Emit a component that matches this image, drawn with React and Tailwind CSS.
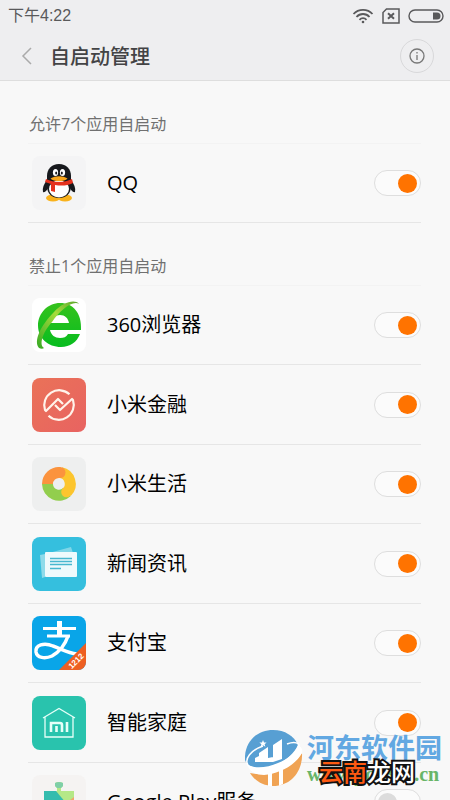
import { useState } from 'react';

const QQIcon = () => (
  <svg viewBox="0 0 54 54" className="size-full">
    <rect width="54" height="54" rx="8" fill="#f4f4f5" />
    <ellipse cx="21" cy="42" rx="7" ry="3.500" fill="#f9b21c" />
    <ellipse cx="33" cy="42" rx="7" ry="3.500" fill="#f9b21c" />
    <path d="M15 24c-3 4-5 8-4 12 2 1 4-2 5-4zM39 24c3 4 5 8 4 12-2 1-4-2-5-4z" fill="#17191d" />
    <path d="M27 8c-7.500 0-12 5-12 12v10c0 8 5 12 12 12s12-4 12-12V20c0-7-4.500-12-12-12z" fill="#17191d" />
    <ellipse cx="27" cy="33" rx="10" ry="8.500" fill="#fff" />
    <ellipse cx="23.500" cy="16.500" rx="2.600" ry="3.600" fill="#fff" />
    <ellipse cx="30.500" cy="16.500" rx="2.600" ry="3.600" fill="#fff" />
    <ellipse cx="24.200" cy="17" rx="1" ry="1.600" fill="#17191d" />
    <ellipse cx="29.800" cy="17" rx="1" ry="1.600" fill="#17191d" />
    <path d="M14 23c8 4 18 4 26 0l1 4c-6 3-12 3-18 2v7l-4-1v-7l-6-2z" fill="#e5321e" />
    <path d="M18.500 22.500c5-3 12-3 17 0-3 3.500-14 3.500-17 0z" fill="#f9a51b" />
  </svg>
);

const BrowserIcon = () => (
  <svg viewBox="0 0 54 54" className="size-full">
    <defs>
      <linearGradient id="browser-e" x2="0" y2="1">
        <stop offset="0" stopColor="#35c21c" />
        <stop offset="1" stopColor="#08bd20" />
      </linearGradient>
      <linearGradient id="browser-ring" x1="0" y1="1" x2="1" y2="0">
        <stop offset="0" stopColor="#35a824" />
        <stop offset="0.6" stopColor="#a6dc3c" />
        <stop offset="1" stopColor="#5ba52d" />
      </linearGradient>
    </defs>
    <rect width="54" height="54" rx="8" fill="#fff" />
    <path fillRule="evenodd" d="M49 32H18c1 5 5 8 10 8 4 0 6-1 8-4h12c-3 8-10 13-19 13C16 49 6 40 6 27.500S16 5 28 5c13 0 22 10 21 27zM18 25h19c-1-5-4-8-9-8s-9 3-10 8z" fill="url(#browser-e)" />
    <path d="M47 6c-4-5-16-2-25 8C9 27 1 43 7 50c2 1 4 1 5 0-5-3-2-15 8-26C28 12 41 2 47 6z" fill="url(#browser-ring)" />
  </svg>
);

const FinanceIcon = () => (
  <svg viewBox="0 0 54 54" className="size-full">
    <defs>
      <linearGradient id="finance-bg" x2="1" y2="1">
        <stop offset="0" stopColor="#ea7258" />
        <stop offset="1" stopColor="#e86361" />
      </linearGradient>
    </defs>
    <rect width="54" height="54" rx="8" fill="url(#finance-bg)" />
    <g fill="none" stroke="#fff3ea" strokeWidth="2.200" strokeLinejoin="round">
      <path d="M37.500 16.300A15 15 0 0 0 13 32l1 1 12-12 5 5" />
      <path d="M16.500 37.700A15 15 0 0 0 41 22l-1-1-12 11-5-5" />
    </g>
  </svg>
);

const LifeIcon = () => (
  <svg viewBox="0 0 54 54" className="size-full">
    <rect width="54" height="54" rx="8" fill="#eeefef" />
    <g fill="none" strokeWidth="11">
      <path d="M15.500 27A11.500 11.500 0 0 0 35 35" stroke="#92ce4d" />
      <path d="M29 15.700A11.500 11.500 0 0 1 35 35" stroke="#fcc52e" />
      <path d="M15.500 27A11.500 11.500 0 0 1 28 15.500" stroke="#fb933e" />
    </g>
    <circle cx="28" cy="15.500" r="5.500" fill="#fb933e" />
    <circle cx="34.500" cy="35" r="5.300" fill="#fcc52e" />
  </svg>
);

const NewsIcon = () => (
  <svg viewBox="0 0 54 54" className="size-full">
    <rect width="54" height="54" rx="8" fill="#35bfde" />
    <path d="M8 18l5-1v23l-3 1z" fill="#8edbea" />
    <path d="M17 16l22-6 2 6z" fill="#7fd6e8" />
    <rect x="13" y="15" width="32" height="25" rx="1" fill="#eefafc" />
    <path d="M18 21.500h22M18 24.500h22M18 27.500h22M18 31.500h11" stroke="#48b8cf" strokeWidth="1.300" />
  </svg>
);

const AlipayIcon = () => (
  <svg viewBox="0 0 54 54" className="size-full">
    <defs>
      <clipPath id="alipay-shape">
        <rect width="54" height="54" rx="8" />
      </clipPath>
    </defs>
    <g clipPath="url(#alipay-shape)">
      <rect width="54" height="54" fill="#09a5e8" />
      <g fill="none" stroke="#fff">
        <path d="M27.500 5v15" strokeWidth="5" />
        <path d="M11 12.500h33M15 20h23" strokeWidth="2.800" />
        <path d="M36 20c-3 9-9 16-16 20-7 3-15 2-16-4-1-7 8-10 17-6 9 3 14 7 24 8" strokeWidth="3.500" />
      </g>
      <path d="M54 27L27 54h27z" fill="#ee5f22" />
      <text textAnchor="middle" transform="translate(46 47) rotate(-45)" fill="#fff" fontSize="8" fontWeight="700" fontFamily="Liberation Sans, sans-serif">1212</text>
    </g>
  </svg>
);

const HomeIcon = () => (
  <svg viewBox="0 0 54 54" className="size-full">
    <rect width="54" height="54" rx="8" fill="#29c3ad" />
    <g fill="none" stroke="#e6fff8">
      <path d="M11 22l16-9.500L43 22M13 21v20h28V21" strokeWidth="1.300" />
      <path d="M19 36V27h9q2 0 2 2v7M24.500 30v6M35 26v10" strokeWidth="2.600" />
    </g>
  </svg>
);

const PlayIcon = () => (
  <svg viewBox="0 0 54 54" className="size-full">
    <rect width="54" height="54" rx="8" fill="#f5f3f2" />
    <path d="M12 16h13v-3l-2-2V8q4-2 8 0v3l-2 2v3h13v34H12z" fill="#b5e887" />
    <path d="M23 11V8q4-2 8 0v3l-2 2h-4z" fill="#7fcfa8" />
    <path d="M12 16h12l10 12-8 22H12z" fill="#35bcae" />
    <path d="M42 22v14l-9-7z" fill="#f2a56d" />
  </svg>
);

const allowedApps = [{ name: 'QQ', Icon: QQIcon, on: true }];

const blockedApps = [
  { name: '360浏览器', Icon: BrowserIcon, on: true },
  { name: '小米金融', Icon: FinanceIcon, on: true },
  { name: '小米生活', Icon: LifeIcon, on: true },
  { name: '新闻资讯', Icon: NewsIcon, on: true },
  { name: '支付宝', Icon: AlipayIcon, on: true },
  { name: '智能家庭', Icon: HomeIcon, on: true },
  { name: 'Google Play服务', Icon: PlayIcon, on: false },
];

const AppRow = ({ app }) => {
  const [enabled, setEnabled] = useState(app.on);
  const { Icon } = app;

  return (
    <li className="h-[79px] even:h-20 border-b border-[#e6e6e6]">
      <label className="flex h-full items-center pl-1">
        <span className="size-[54px] shrink-0">
          <Icon />
        </span>
        <span className="ml-[21px] flex-1 text-xl text-black">{app.name}</span>
        <input
          type="checkbox"
          role="switch"
          checked={enabled}
          onChange={(e) => setEnabled(e.target.checked)}
          className="peer sr-only"
        />
        <span className="flex h-[26px] w-[47px] items-center rounded-full border border-[#dedede] bg-[#fbfbfb] px-[3px] before:size-[19px] before:rounded-full before:bg-[#dcdcdc] peer-checked:justify-end peer-checked:before:bg-[#ff7300]" />
      </label>
    </li>
  );
};

const AppSection = ({ title, apps }) => (
  <section>
    <h2 className="flex h-[63px] items-end border-b border-[#f3f3f3] pb-[7px] pl-px text-base text-[#707070]">{title}</h2>
    <ul>
      {apps.map((app) => (
        <AppRow key={app.name} app={app} />
      ))}
    </ul>
  </section>
);

const StatusBar = () => (
  <div className="flex h-8 items-center justify-between pl-2 pr-1.5 text-[#59595b]">
    <span className="font-['Liberation_Sans','Noto_Sans_CJK_SC',sans-serif] text-base">下午4:22</span>
    <div className="flex items-center gap-2">
      <svg viewBox="0 0 22 16" className="h-4 w-[22px]" fill="none" stroke="currentColor" strokeWidth="1.800">
        <path d="M1.500 6c5-5.500 14-5.500 19 0M4.500 9c3.500-4 9.500-4 13 0M7.500 11.800c2-2.200 5-2.200 7 0" />
        <circle cx="11" cy="14" r="1.300" fill="currentColor" stroke="none" />
      </svg>
      <svg viewBox="0 0 18 16" className="h-4 w-[18px]" fill="none" stroke="currentColor">
        <path d="M4.500 1H17v14H1V4.500z" strokeWidth="1.500" />
        <path d="M6 5.300l6 5.400M12 5.300l-6 5.400" strokeWidth="2" />
      </svg>
      <svg viewBox="0 0 36 14" className="h-3.5 w-9" fill="none">
        <rect x="1" y="1" width="34" height="12" rx="6" stroke="currentColor" strokeWidth="1.400" />
        <path d="M25 3.500h4a3.500 3.500 0 0 1 0 7h-4z" fill="currentColor" />
      </svg>
    </div>
  </div>
);

const Watermark = () => (
  <div className="pointer-events-none absolute right-2 bottom-3.5 flex items-center gap-1">
    <svg viewBox="0 0 58 56" className="h-14 w-[58px]">
      <path d="M0 30C-1 12 12 0 28 0c12 0 21 6 25 15-6 13-20 21-34 23C9 39 2 36 0 30z" fill="#579fd3" />
      <path d="M5 43c18 4 40-3 52-20 1 17-10 33-29 33-10 0-18-5-23-13z" fill="#f0a354" />
      <path d="M10 32v-4l4-2v-3l9-6v15zM28 32V15l9-6v20zM23 28l5-1v5h-5z" fill="#fff" />
      <path d="M23 40h4v16h-4zM34 38h4v16l-4 2z" fill="#fff" />
      <path d="M2 34c6 5 20 4 31-1 10-4 17-10 20-18 3 2 5 4 4 8-7 13-24 21-38 22-9 0-15-4-17-11z" fill="#fff" />
      <path d="M18 16C6 20-1 29 3 35M42 14c8-3 13-1 12 3" fill="none" stroke="#fff" strokeWidth="1.500" />
      <path d="M18 10l1 2.500h2.600l-2 1.700.8 2.600-2.400-1.500-2.400 1.500.8-2.600-2-1.700H17z" fill="#fff" />
    </svg>
    <div className="relative">
      <div className="text-[27px] leading-8 font-bold text-[#62a8e2]">河东软件园</div>
      <div className="font-['Liberation_Serif',serif] text-xl leading-5 font-bold text-[#68b568]">www.pc0359.cn</div>
      <div className="absolute bottom-0 left-3 text-2xl leading-6 font-medium text-[#ff5a12] [-webkit-text-stroke:4px_#111] [paint-order:stroke_fill]">
        云南<span className="text-white">龙网</span>
      </div>
    </div>
  </div>
);

const App = () => (
  <div className="relative flex h-screen flex-col overflow-hidden bg-[#f8f8f8] font-['Open_Sans','Noto_Sans_CJK_SC',sans-serif]">
    <header className="shrink-0 border-b border-[#dedede] bg-[#eeeef0]">
      <StatusBar />
      <div className="flex h-12 items-center pr-4 pl-5">
        <button type="button" aria-label="返回" className="flex w-[30px] text-[#aaa]">
          <svg viewBox="0 0 14 18" className="h-[18px] w-3.5" fill="none" stroke="currentColor" strokeWidth="1.500">
            <path d="M11 1L3 9l8 8" />
          </svg>
        </button>
        <h1 className="flex-1 pt-0.5 text-xl font-medium text-[#434345]">自启动管理</h1>
        <button type="button" aria-label="说明" className="flex size-[34px] items-center justify-center rounded-full border border-[#d8d8da] text-[#777]">
          <svg viewBox="0 0 16 16" className="size-4" fill="none" stroke="currentColor" strokeWidth="1.300">
            <circle cx="8" cy="8" r="7" />
            <path d="M8 7v5M8 4v1.500" />
          </svg>
        </button>
      </div>
    </header>
    <main className="min-h-0 flex-1 overflow-hidden pr-[29px] pl-7">
      <AppSection title="允许7个应用自启动" apps={allowedApps} />
      <AppSection title="禁止1个应用自启动" apps={blockedApps} />
    </main>
    <Watermark />
  </div>
);

export default App;
